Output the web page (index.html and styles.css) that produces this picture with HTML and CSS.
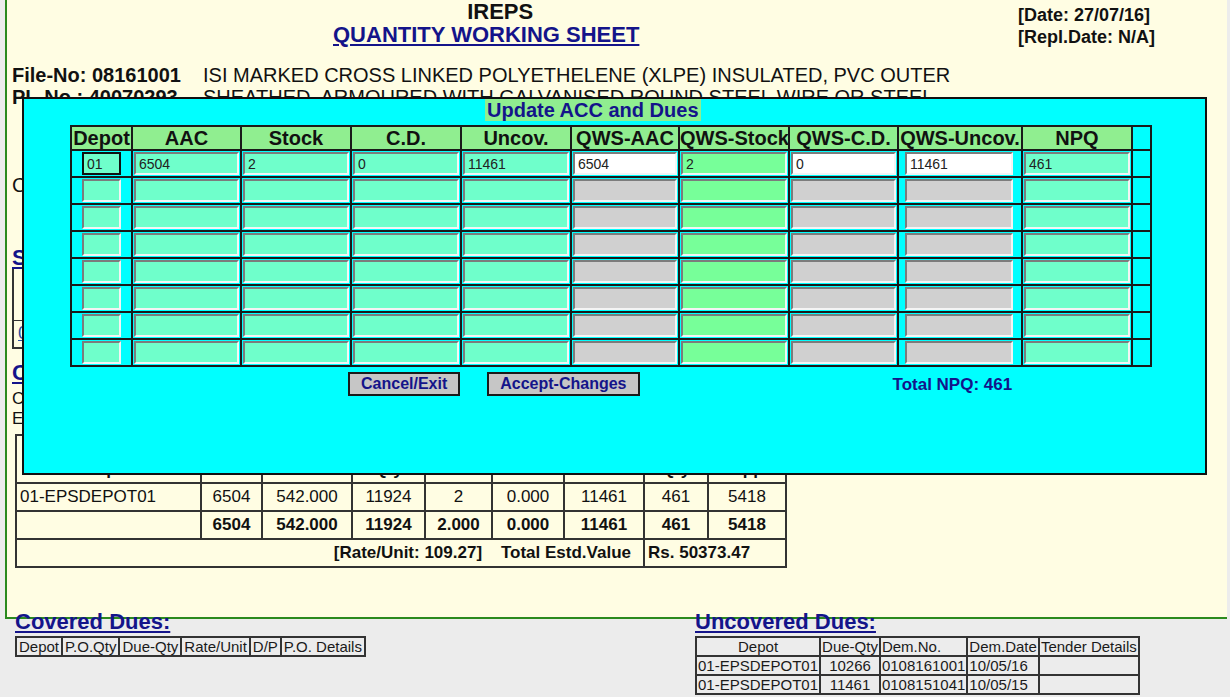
FILE: index.html
```html
<!DOCTYPE html>
<html>
<head>
<meta charset="utf-8">
<title>IREPS - Quantity Working Sheet</title>
<link rel="stylesheet" href="styles.css">
</head>
<body>
<div class="sheet">
  <div class="head">
    <div class="title">
      <div class="ireps">IREPS</div>
      <div class="qws">QUANTITY WORKING SHEET</div>
    </div>
    <div class="dates">
      <div>[Date: 27/07/16]</div>
      <div>[Repl.Date: N/A]</div>
    </div>
  </div>
  <div class="item">
    <div class="ids"><div>File-No: 08161001</div><div>PL-No.: 40070293</div></div>
    <div class="desc">ISI MARKED CROSS LINKED POLYETHELENE (XLPE) INSULATED, PVC OUTER<br>SHEATHED, ARMOURED WITH GALVANISED ROUND STEEL WIRE OR STEEL<br>STRIP, POWER CABLE 1.1 KV GRADE</div>
  </div>
  <div class="consignee">Cons. Unit: Nos &nbsp; Consignee: EPS Depot</div>
  <div class="subhead s1">Stock Position:</div>
  <table class="stocktbl">
    <tr><th>Depot</th><th>Stock</th></tr>
    <tr><td class="lnk">01-EPSDEPOT01</td><td>2</td></tr>
  </table>
  <div class="subhead s2">Calculation of NPQ:</div>
  <div class="note n1">Calculation based on Annual Average Consumption</div>
  <div class="note">Estimated value based on last purchase rate</div>
  <table class="calc">
    <colgroup><col style="width:185px"><col style="width:61px"><col style="width:90px"><col style="width:73px"><col style="width:67px"><col style="width:72px"><col style="width:80px"><col style="width:64px"><col style="width:78px"></colgroup>
    <tr class="hdr"><th>Consignee<br>Depot</th><th>AAC</th><th>Rate/<br>Unit</th><th>Stock<br>Qty</th><th>Stock</th><th>C.D.</th><th>Uncov.</th><th>NPQ<br>Qty</th><th>Value<br>App</th></tr>
    <tr><td class="l">01-EPSDEPOT01</td><td>6504</td><td>542.000</td><td>11924</td><td>2</td><td>0.000</td><td>11461</td><td>461</td><td>5418</td></tr>
    <tr class="b"><td></td><td>6504</td><td>542.000</td><td>11924</td><td>2.000</td><td>0.000</td><td>11461</td><td>461</td><td>5418</td></tr>
    <tr class="b"><td colspan="7" class="r">[Rate/Unit: 109.27] &nbsp;&nbsp; Total Estd.Value</td><td colspan="2" class="l">Rs. 50373.47</td></tr>
  </table>
</div>
<div class="dues">
  <div class="cov">
    <h2>Covered Dues:</h2>
    <table class="tbl">
      <tr><th>Depot</th><th>P.O.Qty</th><th>Due-Qty</th><th>Rate/Unit</th><th>D/P</th><th>P.O. Details</th></tr>
    </table>
  </div>
  <div class="uncov">
    <h2>Uncovered Dues:</h2>
    <table class="tbl">
      <tr><th>Depot</th><th>Due-Qty</th><th class="l">Dem.No.</th><th class="l">Dem.Date</th><th>Tender Details</th></tr>
      <tr><td>01-EPSDEPOT01</td><td class="c">10266</td><td>0108161001</td><td>10/05/16</td><td></td></tr>
      <tr><td>01-EPSDEPOT01</td><td class="c">11461</td><td>0108151041</td><td>10/05/15</td><td></td></tr>
    </table>
  </div>
</div>

<div class="modal">
  <div class="mtitle"><span>Update ACC and Dues</span></div>
  <table class="grid">
    <colgroup><col style="width:61px"><col style="width:109px"><col style="width:110px"><col style="width:110px"><col style="width:110px"><col style="width:108px"><col style="width:110px"><col style="width:109px"><col style="width:124px"><col style="width:110px"><col style="width:19px"></colgroup>
    <tr><th>Depot</th><th>AAC</th><th>Stock</th><th>C.D.</th><th>Uncov.</th><th>QWS-AAC</th><th>QWS-Stock</th><th>QWS-C.D.</th><th>QWS-Uncov.</th><th>NPQ</th><th class="e"></th></tr>
    <tr><td class="dp"><input class="aq focus" value="01"></td><td><input class="aq" value="6504"></td><td><input class="aq" value="2"></td><td><input class="aq" value="0"></td><td><input class="aq" value="11461"></td><td><input class="wh" value="6504"></td><td><input class="gr" value="2"></td><td><input class="wh" value="0"></td><td class="un"><input class="wh" value="11461"></td><td><input class="aq" value="461"></td><td></td></tr>
    <tr><td class="dp"><input class="aq"></td><td><input class="aq"></td><td><input class="aq"></td><td><input class="aq"></td><td><input class="aq"></td><td><input class="gy"></td><td><input class="gr"></td><td><input class="gy"></td><td class="un"><input class="gy"></td><td><input class="aq"></td><td></td></tr>
    <tr><td class="dp"><input class="aq"></td><td><input class="aq"></td><td><input class="aq"></td><td><input class="aq"></td><td><input class="aq"></td><td><input class="gy"></td><td><input class="gr"></td><td><input class="gy"></td><td class="un"><input class="gy"></td><td><input class="aq"></td><td></td></tr>
    <tr><td class="dp"><input class="aq"></td><td><input class="aq"></td><td><input class="aq"></td><td><input class="aq"></td><td><input class="aq"></td><td><input class="gy"></td><td><input class="gr"></td><td><input class="gy"></td><td class="un"><input class="gy"></td><td><input class="aq"></td><td></td></tr>
    <tr><td class="dp"><input class="aq"></td><td><input class="aq"></td><td><input class="aq"></td><td><input class="aq"></td><td><input class="aq"></td><td><input class="gy"></td><td><input class="gr"></td><td><input class="gy"></td><td class="un"><input class="gy"></td><td><input class="aq"></td><td></td></tr>
    <tr><td class="dp"><input class="aq"></td><td><input class="aq"></td><td><input class="aq"></td><td><input class="aq"></td><td><input class="aq"></td><td><input class="gy"></td><td><input class="gr"></td><td><input class="gy"></td><td class="un"><input class="gy"></td><td><input class="aq"></td><td></td></tr>
    <tr><td class="dp"><input class="aq"></td><td><input class="aq"></td><td><input class="aq"></td><td><input class="aq"></td><td><input class="aq"></td><td><input class="gy"></td><td><input class="gr"></td><td><input class="gy"></td><td class="un"><input class="gy"></td><td><input class="aq"></td><td></td></tr>
    <tr><td class="dp"><input class="aq"></td><td><input class="aq"></td><td><input class="aq"></td><td><input class="aq"></td><td><input class="aq"></td><td><input class="gy"></td><td><input class="gr"></td><td><input class="gy"></td><td class="un"><input class="gy"></td><td><input class="aq"></td><td></td></tr>
  </table>
  <div class="actions">
    <button class="btn">Cancel/Exit</button>
    <button class="btn">Accept-Changes</button>
    <span class="total">Total NPQ: 461</span>
  </div>
</div>
</body>
</html>
```
FILE: styles.css
```css
* { box-sizing: border-box; }
html, body { margin: 0; padding: 0; }
body {
  width: 1230px;
  height: 697px;
  overflow: hidden;
  background: #ececec;
  font-family: "Liberation Sans", Arial, sans-serif;
  color: #111;
}
.sheet {
  margin-left: 5px;
  width: 1222px;
  height: 619px;
  background: #fffde3;
  border-left: 2px solid #2b8a1e;
  border-bottom: 2px solid #2b8a1e;
  padding-left: 5px;
}
.head { display: flex; }
.title { margin-left: 321px; text-align: center; font-weight: bold; font-size: 22px; line-height: 23px; }
.ireps { padding-left: 28px; }
.qws { color: #14148a; text-decoration: underline; }
.dates { margin-left: auto; width: 209px; margin-top: 4px; font-weight: bold; font-size: 18px; line-height: 22px; }
.item { display: flex; margin-top: 16px; font-size: 20px; line-height: 22px; }
.ids { width: 191px; font-weight: bold; flex: none; }
.consignee { margin-top: 44px; font-size: 20px; line-height: 22px; }
.subhead { color: #14148a; font-weight: bold; font-size: 22px; line-height: 24px; text-decoration: underline; }
.s1 { margin-top: 50px; }
.stocktbl { margin-top: -3px; border: 2px solid #333; border-collapse: collapse; font-size: 18px; }
.stocktbl th { height: 52px; vertical-align: bottom; padding: 0 4px; border: 1px solid #333; }
.stocktbl td { height: 28px; padding: 0 4px; border: 1px solid #333; }
.stocktbl .lnk { color: #2a4fa0; text-decoration: underline; }
.s2 { margin-top: 12px; }
.note { font-size: 17px; line-height: 20px; }
.n1 { margin-top: 4px; }
.calc { border-collapse: collapse; table-layout: fixed; width: 770px; margin: 5px 0 0 3px; font-size: 17px; }
.calc th, .calc td { border: 2px solid #333; text-align: center; padding: 0 3px; height: 28px; white-space: nowrap; overflow: hidden; }
.calc .hdr th { height: 48px; font-size: 17px; line-height: 20px; vertical-align: top; padding-top: 4px; }
.calc .l { text-align: left; }
.calc .r { text-align: right; padding-right: 12px; }
.calc .b td { font-weight: bold; }

.dues { display: flex; margin-top: -9px; padding-left: 15px; }
.cov { width: 680px; }
.dues h2 { font-size: 22px; line-height: 24px; color: #14148a; text-decoration: underline; margin: 0 0 2px; }
.tbl { border-collapse: separate; border-spacing: 0; border: 1px solid #333; font-size: 15px; color: #1a1a1a; }
.tbl th, .tbl td { border: 1px solid #333; padding: 0 1px; line-height: 17px; font-weight: normal; white-space: nowrap; text-align: left; }
.cov .tbl th { padding: 0 2px; }
.uncov .tbl th { text-align: center; }
.uncov .tbl th.l { text-align: left; }
.uncov .tbl td.c { text-align: center; }

.modal {
  position: absolute;
  left: 22px;
  top: 97px;
  width: 1185px;
  height: 378px;
  background: #00ffff;
  border: 2px solid #111;
}
.mtitle { padding-left: 461px; font-size: 20px; line-height: 22px; font-weight: bold; color: #14148a; }
.mtitle span { background: #90ee90; padding: 0 2px; }
.grid { border-collapse: collapse; table-layout: fixed; width: 1080px; margin: 4px 0 0 46px; }
.grid th { background: #90ee90; border: 2px solid #1a1a1a; font-size: 20px; line-height: 20px; padding: 1px 0; font-weight: bold; white-space: nowrap; overflow: hidden; }
.grid th.e { background: transparent; }
.grid td { border: 2px solid #1a1a1a; padding: 1px; }
.grid input {
  display: block;
  width: 100%;
  height: 23px;
  margin: 0;
  padding: 0 3px;
  border: 2px solid;
  border-color: #7c7c7c #f4f4f4 #f4f4f4 #7c7c7c;
  font-family: "Liberation Sans", Arial, sans-serif;
  font-size: 14px;
  color: #222;
  outline: none;
}
.grid td.dp { padding-left: 10px; }
.grid td.dp input { width: 39px; }
.grid td.un { padding: 1px 8px 1px 6px; }
.grid input.aq { background: #6fffcb; }
.grid input.wh { background: #ffffff; }
.grid input.gy { background: #d0d0d0; }
.grid input.gr { background: #77ff99; }
.grid input.focus { border: 2px solid #111; }
.actions { display: flex; align-items: center; margin-top: 5px; padding-left: 324px; }
.btn {
  height: 24px;
  padding: 0 11px;
  background: #c6c6c6;
  border: 2px solid #1a1a1a;
  font-family: "Liberation Sans", Arial, sans-serif;
  font-weight: bold;
  font-size: 16px;
  color: #14148a;
}
.btn + .btn { margin-left: 27px; }
.total { margin-left: 253px; margin-top: 2px; font-weight: bold; font-size: 17px; color: #14148a; }
```
